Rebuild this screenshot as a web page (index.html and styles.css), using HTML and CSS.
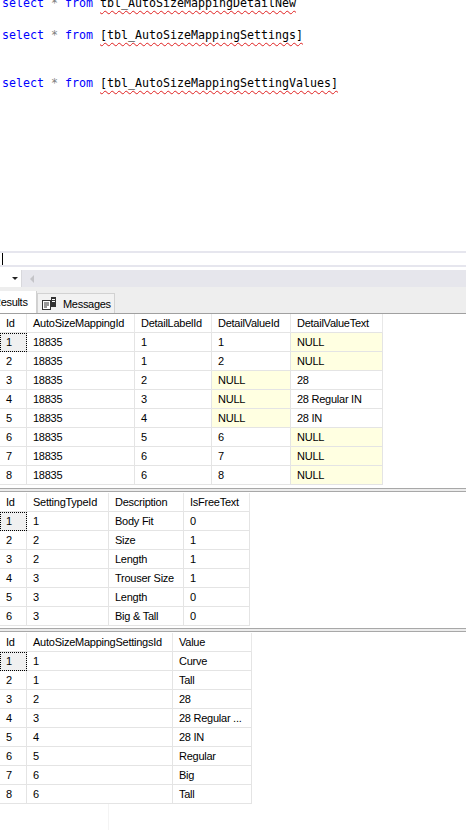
FILE: index.html
```html
<!DOCTYPE html>
<html>
<head>
<meta charset="utf-8">
<link rel="stylesheet" href="styles.css">
</head>
<body>
<div class="editor">
<pre class="code"><span class="kw">select</span> <span class="op">*</span> <span class="kw">from</span> <span class="err">tbl_AutoSizeMappingDetailNew</span>

<span class="kw">select</span> <span class="op">*</span> <span class="kw">from</span> <span class="err">[tbl_AutoSizeMappingSettings]</span>


<span class="kw">select</span> <span class="op">*</span> <span class="kw">from</span> <span class="err">[tbl_AutoSizeMappingSettingValues]</span></pre>
</div>
<div class="findbar"><span class="caret"></span></div>
<div class="toolbar">
  <div class="combo"><span class="arrow"></span></div>
  <span class="scroll-left"></span>
</div>
<div class="tabs">
  <div class="tab tab-active"><span class="tab-text clipped">Results</span></div>
  <div class="tab tab-msg">
    <svg class="msg-icon" width="14" height="13" viewBox="0 0 14 13">
      <rect x="0.5" y="3.5" width="8" height="9" fill="#fff" stroke="#333"/>
      <line x1="2" y1="6" x2="7" y2="6" stroke="#333"/>
      <line x1="2" y1="8" x2="7" y2="8" stroke="#333"/>
      <line x1="2" y1="10" x2="5" y2="10" stroke="#333"/>
      <rect x="9" y="0" width="5" height="10" fill="#333"/>
      <line x1="10" y1="2.5" x2="13" y2="2.5" stroke="#fff"/>
      <line x1="10" y1="4.5" x2="13" y2="4.5" stroke="#fff"/>
    </svg>
    <span class="tab-text">Messages</span>
  </div>
</div>
<div class="results">
  <div class="grid g1">
    <div class="c h">Id</div><div class="c h">AutoSizeMappingId</div><div class="c h">DetailLabelId</div><div class="c h">DetailValueId</div><div class="c h">DetailValueText</div>
    <div class="c rh sel">1</div><div class="c">18835</div><div class="c">1</div><div class="c">1</div><div class="c null">NULL</div>
    <div class="c rh">2</div><div class="c">18835</div><div class="c">1</div><div class="c">2</div><div class="c null">NULL</div>
    <div class="c rh">3</div><div class="c">18835</div><div class="c">2</div><div class="c null">NULL</div><div class="c">28</div>
    <div class="c rh">4</div><div class="c">18835</div><div class="c">3</div><div class="c null">NULL</div><div class="c">28 Regular IN</div>
    <div class="c rh">5</div><div class="c">18835</div><div class="c">4</div><div class="c null">NULL</div><div class="c">28 IN</div>
    <div class="c rh">6</div><div class="c">18835</div><div class="c">5</div><div class="c">6</div><div class="c null">NULL</div>
    <div class="c rh">7</div><div class="c">18835</div><div class="c">6</div><div class="c">7</div><div class="c null">NULL</div>
    <div class="c rh">8</div><div class="c">18835</div><div class="c">6</div><div class="c">8</div><div class="c null">NULL</div>
  </div>
  <div class="splitter"></div>
  <div class="grid g2">
    <div class="c h">Id</div><div class="c h">SettingTypeId</div><div class="c h">Description</div><div class="c h">IsFreeText</div>
    <div class="c rh sel">1</div><div class="c">1</div><div class="c">Body Fit</div><div class="c">0</div>
    <div class="c rh">2</div><div class="c">2</div><div class="c">Size</div><div class="c">1</div>
    <div class="c rh">3</div><div class="c">2</div><div class="c">Length</div><div class="c">1</div>
    <div class="c rh">4</div><div class="c">3</div><div class="c">Trouser Size</div><div class="c">1</div>
    <div class="c rh">5</div><div class="c">3</div><div class="c">Length</div><div class="c">0</div>
    <div class="c rh">6</div><div class="c">3</div><div class="c">Big &amp; Tall</div><div class="c">0</div>
  </div>
  <div class="splitter splitter-b"></div>
  <div class="grid g3">
    <div class="c h">Id</div><div class="c h">AutoSizeMappingSettingsId</div><div class="c h">Value</div>
    <div class="c rh sel">1</div><div class="c">1</div><div class="c">Curve</div>
    <div class="c rh">2</div><div class="c">1</div><div class="c">Tall</div>
    <div class="c rh">3</div><div class="c">2</div><div class="c">28</div>
    <div class="c rh">4</div><div class="c">3</div><div class="c">28 Regular ...</div>
    <div class="c rh">5</div><div class="c">4</div><div class="c">28 IN</div>
    <div class="c rh">6</div><div class="c">5</div><div class="c">Regular</div>
    <div class="c rh">7</div><div class="c">6</div><div class="c">Big</div>
    <div class="c rh">8</div><div class="c">6</div><div class="c">Tall</div>
  </div>
  <div class="ghost"></div>
</div>
</body>
</html>
```
FILE: styles.css
```css
* { box-sizing: border-box; }
html, body { margin: 0; padding: 0; background: #fff; }
body { width: 466px; height: 830px; overflow: hidden; }

.editor { height: 251px; overflow: hidden; background: #fff; }
.code {
  margin: -5px 0 0 0;
  padding-left: 2px;
  font-family: "DejaVu Sans Mono", "Liberation Mono", monospace;
  font-size: 11.63px;
  line-height: 16px;
  color: #000;
}
.kw { color: #0000ff; }
.op { color: #808080; }
.err {
  text-decoration: underline wavy #e02020;
  text-decoration-thickness: 1px;
  text-underline-offset: 3px;
}

.findbar {
  height: 16px;
  border-top: 2px solid #e6e6ee;
  border-bottom: 2px solid #e6e6ee;
  margin-bottom: 3px;
  padding: 0 0 0 2px;
  display: flex;
  align-items: center;
}
.caret { width: 1px; height: 12px; background: #000; display: block; }

.toolbar {
  height: 17px;
  background: #e6e6ec;
  display: flex;
  align-items: center;
}
.combo {
  width: 22px;
  height: 17px;
  background: #fff;
  border-right: 1px solid #d8d8dc;
  display: flex;
  align-items: center;
  justify-content: flex-end;
  padding-right: 3px;
}
.arrow {
  width: 0; height: 0;
  border-left: 3px solid transparent;
  border-right: 3px solid transparent;
  border-top: 3px solid #222;
}
.scroll-left {
  margin-left: 8px;
  width: 0; height: 0;
  border-top: 4px solid transparent;
  border-bottom: 4px solid transparent;
  border-right: 4px solid #c4c4c8;
}

.tabs {
  height: 26px;
  background: #eeeeee;
  display: flex;
  align-items: flex-end;
}
.tab {
  display: flex;
  align-items: center;
  font-family: "Liberation Sans", Arial, sans-serif;
  font-size: 11px;
  letter-spacing: -0.3px;
  color: #000;
  overflow: hidden;
  white-space: nowrap;
}
.tab-active {
  width: 37px;
  height: 22px;
  background: #fff;
  border-right: 1px solid #d0d0d0;
}
.clipped { margin-left: -7px; }
.tab-msg {
  width: 78px;
  height: 20px;
  background: #f2f2f2;
  border: 1px solid #d2d2d2;
  border-bottom: none;
  padding-left: 4px;
}
.msg-icon { margin-right: 7px; flex: none; }

.results { border-top: 1px solid #a0a0a0; }

.grid { display: grid; width: max-content; }
.g1 { grid-template-columns: 27px 108px 77px 79px 92px; }
.g2 { grid-template-columns: 27px 82px 75px 66px; }
.g3 { grid-template-columns: 27px 146px 79px; }

.c {
  height: 19px;
  line-height: 18px;
  padding-left: 6px;
  border-right: 1px solid #e4e4e4;
  border-bottom: 1px solid #e4e4e4;
  font-family: "Liberation Sans", Arial, sans-serif;
  font-size: 11px;
  letter-spacing: -0.25px;
  color: #000;
  white-space: nowrap;
  overflow: hidden;
  background: #fff;
}
.h { border-right-color: #e8e8e8; }
.null { background: #ffffe1; }
.sel { background: #f0f0f0; outline: 1px dotted #000; outline-offset: -1px; }

.splitter {
  height: 8px;
  border-bottom: 1px solid #fff;
  background: linear-gradient(#fff 0 3px, #a8a8a8 3px 4px, #ececec 4px 6px, #a8a8a8 6px 7px, #fff 7px);
}
.splitter-b {
  height: 7px;
  background: linear-gradient(#fff 0 2px, #a8a8a8 2px 3px, #ececec 3px 5px, #a8a8a8 5px 6px, #fff 6px);
}

.ghost { margin-left: 108px; height: 30px; border-left: 1px solid #f4f4f4; }
```
